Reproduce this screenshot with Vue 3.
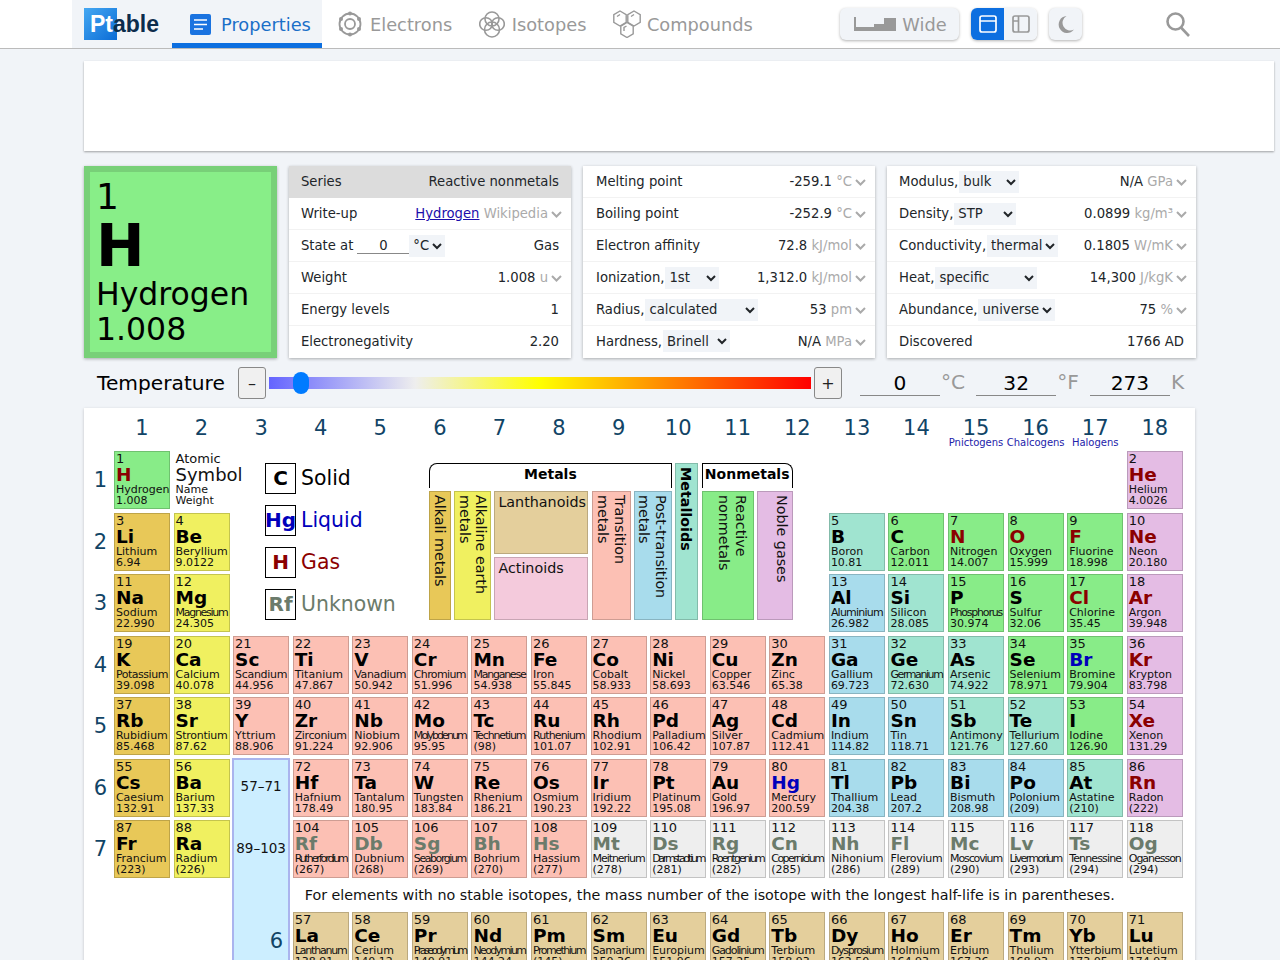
<template>
  <header class="topbar">
    <div class="brand-tabs">
      <a class="logo"><span class="logo-pt">Pt</span>able</a>
      <a class="tab active">
        <svg width="21" height="21" viewBox="0 0 21 21"><rect width="21" height="21" rx="2" fill="#1a73e0" /><path d="M4 6h13M4 10.5h13M4 15h9" stroke="#fff" stroke-width="1.6" /></svg>
        Properties
      </a>
    </div>
    <nav class="tabs">
      <a class="tab">
        <svg width="24" height="26" viewBox="0 0 24 26" fill="none" stroke="#999" stroke-width="1.8">
          <circle cx="12" cy="13" r="10.5" />
          <circle cx="12" cy="13" r="5" />
          <g fill="#999" stroke="none">
            <circle cx="12" cy="2.5" r="2" /><circle cx="12" cy="23.5" r="2" /><circle cx="3" cy="8" r="2" />
            <circle cx="21" cy="8" r="2" /><circle cx="3" cy="18" r="2" /><circle cx="21" cy="18" r="2" />
          </g>
        </svg>
        Electrons
      </a>
      <a class="tab tab-iso">
        <svg width="26" height="27" viewBox="0 0 26 27" fill="none" stroke="#999" stroke-width="1.6">
          <circle cx="13" cy="8" r="7" />
          <circle cx="7" cy="13" r="6.300" />
          <circle cx="19" cy="13" r="6.300" />
          <circle cx="13" cy="18.500" r="7.500" />
        </svg>
        Isotopes
      </a>
      <a class="tab tab-comp">
        <svg width="28" height="28" viewBox="0 0 28 28" fill="none" stroke="#999" stroke-width="1.4">
          <path d="M7 1l6.200 3.700v7.600L7 16 .8 12.300V4.700z" />
          <path d="M21 1l6.200 3.700v7.600L21 16l-6.200-3.700V4.700z" />
          <path d="M14 12.500l6.200 3.700v7.600L14 27.500l-6.200-3.700v-7.600z" />
          <path d="M4 6.500l3-2M18 6.500l3-2M11 21l0-3.500l2.500-1.500" />
        </svg>
        Compounds
      </a>
    </nav>
    <div class="tools">
      <button class="tool wide" type="button">
        <svg width="42" height="14" viewBox="0 0 42 14"><path d="M0 0h2v10h18V7h10V1h12v13H0z" fill="#999" /></svg>
        Wide
      </button>
      <div class="tool-pair">
        <button class="tool on" type="button">
          <svg width="18" height="18" viewBox="0 0 18 18" fill="none" stroke="#fff" stroke-width="1.7"><rect x="1" y="1" width="16" height="16" rx="2" /><path d="M1 6h16" /></svg>
        </button>
        <button class="tool" type="button">
          <svg width="18" height="18" viewBox="0 0 18 18" fill="none" stroke="#999" stroke-width="1.7"><rect x="1" y="1" width="16" height="16" rx="2" /><path d="M6.500 1v16M1 6h5.500" /></svg>
        </button>
      </div>
      <button class="tool" type="button">
        <svg width="16" height="17" viewBox="0 0 16 17"><path d="M8.500 0A8.500 8.500 0 1 0 16 13.500 7.500 7.500 0 0 1 8.500 0z" fill="#999" /></svg>
      </button>
      <svg class="search" width="24" height="25" viewBox="0 0 24 25" fill="none" stroke="#999" stroke-width="2.600"><circle cx="9.500" cy="9.500" r="8" /><path d="M15 15.500l8 8.500" /></svg>
    </div>
  </header>

  <main class="page">
    <div class="ad-slot"></div>

    <section class="overview">
      <div class="big-element">
        <div class="big-num">1</div>
        <div class="big-sym">H</div>
        <div class="big-name">Hydrogen</div>
        <div class="big-weight">1.008</div>
      </div>

      <div class="panel panel-a">
        <div class="row series"><span>Series</span><span>Reactive nonmetals</span></div>
        <div class="row">
          <span>Write-up</span>
          <span class="value"><a class="link" href="#">Hydrogen</a> <span class="unit">Wikipedia</span><svg class="chev" width="11" height="7" viewBox="0 0 11 7"><path d="M1 1l4.500 4.500L10 1" /></svg></span>
        </div>
        <div class="row">
          <span class="label">State at<input class="state-input" value="0" /><select class="pick state-unit"><option>°C</option><option>°F</option><option>K</option></select></span>
          <span>Gas</span>
        </div>
        <div class="row">
          <span>Weight</span>
          <span class="value">1.008 <span class="unit">u</span><svg class="chev" width="11" height="7" viewBox="0 0 11 7"><path d="M1 1l4.500 4.500L10 1" /></svg></span>
        </div>
        <div class="row"><span>Energy levels</span><span>1</span></div>
        <div class="row"><span>Electronegativity</span><span>2.20</span></div>
      </div>

      <div v-for="(panel, i) in panels" :key="i" class="panel" :class="i === 0 ? 'panel-b' : 'panel-c'">
        <div v-for="item in panel" :key="item.label" class="row">
          <span class="label">
            {{ item.label }}
            <select v-if="item.options" class="pick" :style="{ width: item.width + 'px' }">
              <option v-for="o in item.options" :key="o">{{ o }}</option>
            </select>
          </span>
          <span v-if="item.unit" class="value">{{ item.value }} <span class="unit">{{ item.unit }}</span><svg class="chev" width="11" height="7" viewBox="0 0 11 7"><path d="M1 1l4.500 4.500L10 1" /></svg></span>
          <span v-else>{{ item.value }}</span>
        </div>
      </div>
    </section>

    <section class="temperature">
      <span class="temp-title">Temperature</span>
      <button class="step" type="button">–</button>
      <input class="slider" type="range" min="0" max="6000" value="273" />
      <button class="step" type="button">+</button>
      <div class="temp-fields">
        <label v-for="t in temps" :key="t.unit" class="temp-field">
          <input :value="t.value" /><span>{{ t.unit }}</span>
        </label>
      </div>
    </section>

    <section class="table-card">
      <div class="ptable">
        <div v-for="g in 18" :key="g" class="group-head" :style="{ gridColumn: g + 1 }">
          {{ g }}
          <small v-if="groupNames[g]">{{ groupNames[g] }}</small>
        </div>
        <div v-for="p in 7" :key="p" class="period" :style="{ gridRow: p + 1 }">{{ p }}</div>

        <div class="el key">
          <div class="el-num">Atomic</div>
          <div class="el-sym">Symbol</div>
          <div class="el-name">Name</div>
          <div class="el-weight">Weight</div>
        </div>

        <div class="states">
          <div v-for="s in stateKey" :key="s.label" class="state" :class="s.cls">
            <b>{{ s.sym }}</b><span>{{ s.label }}</span>
          </div>
        </div>

        <div class="cats">
          <div class="bracket metals">Metals</div>
          <div class="bar bold metalloid metalloid-bar">Metalloids</div>
          <div class="bracket nonmetals">Nonmetals</div>
          <div class="bar alkali">Alkali metals</div>
          <div class="bar alkaline">Alkaline earth<br />metals</div>
          <div class="flat lanth">Lanthanoids</div>
          <div class="flat actin">Actinoids</div>
          <div class="bar trans">Transition<br />metals</div>
          <div class="bar post">Post-transition<br />metals</div>
          <div class="bar nonmetal">Reactive<br />nonmetals</div>
          <div class="bar noble">Noble gases</div>
        </div>

        <div
          v-for="el in elements"
          :key="el.num"
          class="el"
          :class="[el.cat, el.state]"
          :style="{ gridColumn: el.col + 1, gridRow: el.row + 1 }"
        >
          <div class="el-num">{{ el.num }}</div>
          <div class="el-sym">{{ el.sym }}</div>
          <div class="el-name" :style="{ letterSpacing: el.squeeze }">{{ el.name }}</div>
          <div class="el-weight">{{ el.weight }}</div>
        </div>

        <div class="series-link">
          <div>57–71</div>
          <div>89–103</div>
          <div class="series-period">6</div>
        </div>

        <p class="note">For elements with no stable isotopes, the mass number of the isotope with the longest half-life is in parentheses.</p>
      </div>
    </section>
  </main>
</template>

<script setup>
const panels = [
  [
    { label: 'Melting point', value: '-259.1', unit: '°C' },
    { label: 'Boiling point', value: '-252.9', unit: '°C' },
    { label: 'Electron affinity', value: '72.8', unit: 'kJ/mol' },
    { label: 'Ionization,', options: ['1st', '2nd', '3rd'], width: 54, value: '1,312.0', unit: 'kJ/mol' },
    { label: 'Radius,', options: ['calculated', 'empirical', 'covalent'], width: 113, value: '53', unit: 'pm' },
    { label: 'Hardness,', options: ['Brinell', 'Mohs', 'Vickers'], width: 67, value: 'N/A', unit: 'MPa' },
  ],
  [
    { label: 'Modulus,', options: ['bulk', 'shear', 'young'], width: 60, value: 'N/A', unit: 'GPa' },
    { label: 'Density,', options: ['STP', 'liquid'], width: 62, value: '0.0899', unit: 'kg/m³' },
    { label: 'Conductivity,', options: ['thermal', 'electric'], width: 71, value: '0.1805', unit: 'W/mK' },
    { label: 'Heat,', options: ['specific', 'vaporization', 'fusion'], width: 102, value: '14,300', unit: 'J/kgK' },
    { label: 'Abundance,', options: ['universe', 'solar', 'crust'], width: 77, value: '75', unit: '%' },
    { label: 'Discovered', value: '1766 AD' },
  ],
]

const temps = [
  { value: 0, unit: '°C' },
  { value: 32, unit: '°F' },
  { value: 273, unit: 'K' },
]

const groupNames = { 15: 'Pnictogens', 16: 'Chalcogens', 17: 'Halogens' }

const stateKey = [
  { sym: 'C', label: 'Solid', cls: 'solid' },
  { sym: 'Hg', label: 'Liquid', cls: 'liquid' },
  { sym: 'H', label: 'Gas', cls: 'gas' },
  { sym: 'Rf', label: 'Unknown', cls: 'unknown-state' },
]

// num sym name weight category period group
const raw = `1 H Hydrogen 1.008 nonmetal 1 1
2 He Helium 4.0026 noble 1 18
3 Li Lithium 6.94 alkali 2 1
4 Be Beryllium 9.0122 alkaline 2 2
5 B Boron 10.81 metalloid 2 13
6 C Carbon 12.011 nonmetal 2 14
7 N Nitrogen 14.007 nonmetal 2 15
8 O Oxygen 15.999 nonmetal 2 16
9 F Fluorine 18.998 nonmetal 2 17
10 Ne Neon 20.180 noble 2 18
11 Na Sodium 22.990 alkali 3 1
12 Mg Magnesium 24.305 alkaline 3 2
13 Al Aluminium 26.982 post 3 13
14 Si Silicon 28.085 metalloid 3 14
15 P Phosphorus 30.974 nonmetal 3 15
16 S Sulfur 32.06 nonmetal 3 16
17 Cl Chlorine 35.45 nonmetal 3 17
18 Ar Argon 39.948 noble 3 18
19 K Potassium 39.098 alkali 4 1
20 Ca Calcium 40.078 alkaline 4 2
21 Sc Scandium 44.956 trans 4 3
22 Ti Titanium 47.867 trans 4 4
23 V Vanadium 50.942 trans 4 5
24 Cr Chromium 51.996 trans 4 6
25 Mn Manganese 54.938 trans 4 7
26 Fe Iron 55.845 trans 4 8
27 Co Cobalt 58.933 trans 4 9
28 Ni Nickel 58.693 trans 4 10
29 Cu Copper 63.546 trans 4 11
30 Zn Zinc 65.38 trans 4 12
31 Ga Gallium 69.723 post 4 13
32 Ge Germanium 72.630 metalloid 4 14
33 As Arsenic 74.922 metalloid 4 15
34 Se Selenium 78.971 nonmetal 4 16
35 Br Bromine 79.904 nonmetal 4 17
36 Kr Krypton 83.798 noble 4 18
37 Rb Rubidium 85.468 alkali 5 1
38 Sr Strontium 87.62 alkaline 5 2
39 Y Yttrium 88.906 trans 5 3
40 Zr Zirconium 91.224 trans 5 4
41 Nb Niobium 92.906 trans 5 5
42 Mo Molybdenum 95.95 trans 5 6
43 Tc Technetium (98) trans 5 7
44 Ru Ruthenium 101.07 trans 5 8
45 Rh Rhodium 102.91 trans 5 9
46 Pd Palladium 106.42 trans 5 10
47 Ag Silver 107.87 trans 5 11
48 Cd Cadmium 112.41 trans 5 12
49 In Indium 114.82 post 5 13
50 Sn Tin 118.71 post 5 14
51 Sb Antimony 121.76 metalloid 5 15
52 Te Tellurium 127.60 metalloid 5 16
53 I Iodine 126.90 nonmetal 5 17
54 Xe Xenon 131.29 noble 5 18
55 Cs Caesium 132.91 alkali 6 1
56 Ba Barium 137.33 alkaline 6 2
72 Hf Hafnium 178.49 trans 6 4
73 Ta Tantalum 180.95 trans 6 5
74 W Tungsten 183.84 trans 6 6
75 Re Rhenium 186.21 trans 6 7
76 Os Osmium 190.23 trans 6 8
77 Ir Iridium 192.22 trans 6 9
78 Pt Platinum 195.08 trans 6 10
79 Au Gold 196.97 trans 6 11
80 Hg Mercury 200.59 trans 6 12
81 Tl Thallium 204.38 post 6 13
82 Pb Lead 207.2 post 6 14
83 Bi Bismuth 208.98 post 6 15
84 Po Polonium (209) post 6 16
85 At Astatine (210) metalloid 6 17
86 Rn Radon (222) noble 6 18
87 Fr Francium (223) alkali 7 1
88 Ra Radium (226) alkaline 7 2
104 Rf Rutherfordium (267) trans 7 4
105 Db Dubnium (268) trans 7 5
106 Sg Seaborgium (269) trans 7 6
107 Bh Bohrium (270) trans 7 7
108 Hs Hassium (277) trans 7 8
109 Mt Meitnerium (278) unknown 7 9
110 Ds Darmstadtium (281) unknown 7 10
111 Rg Roentgenium (282) unknown 7 11
112 Cn Copernicium (285) unknown 7 12
113 Nh Nihonium (286) unknown 7 13
114 Fl Flerovium (289) unknown 7 14
115 Mc Moscovium (290) unknown 7 15
116 Lv Livermorium (293) unknown 7 16
117 Ts Tennessine (294) unknown 7 17
118 Og Oganesson (294) unknown 7 18
57 La Lanthanum 138.91 lanth 9 4
58 Ce Cerium 140.12 lanth 9 5
59 Pr Praseodymium 140.91 lanth 9 6
60 Nd Neodymium 144.24 lanth 9 7
61 Pm Promethium (145) lanth 9 8
62 Sm Samarium 150.36 lanth 9 9
63 Eu Europium 151.96 lanth 9 10
64 Gd Gadolinium 157.25 lanth 9 11
65 Tb Terbium 158.93 lanth 9 12
66 Dy Dysprosium 162.50 lanth 9 13
67 Ho Holmium 164.93 lanth 9 14
68 Er Erbium 167.26 lanth 9 15
69 Tm Thulium 168.93 lanth 9 16
70 Yb Ytterbium 173.05 lanth 9 17
71 Lu Lutetium 174.97 lanth 9 18`

const gases = ['H', 'He', 'N', 'O', 'F', 'Ne', 'Cl', 'Ar', 'Kr', 'Xe', 'Rn']
const liquids = ['Br', 'Hg']

const ctx = document.createElement('canvas').getContext('2d')
ctx.font = '11px "DejaVu Sans"'

// long names get squeezed so they stay inside the 56px cell
function squeeze(name) {
  const width = ctx.measureText(name).width
  if (width <= 54) return undefined
  return ((52 - width) / name.length).toFixed(2) + 'px'
}

function stateOf(num, sym) {
  if (num >= 104) return 'unknown-state'
  if (gases.includes(sym)) return 'gas'
  if (liquids.includes(sym)) return 'liquid'
  return 'solid'
}

const elements = raw.split('\n').map((line) => {
  const [num, sym, name, weight, cat, row, col] = line.split(' ')
  return {
    num: Number(num),
    sym,
    name,
    weight,
    cat,
    row: Number(row),
    col: Number(col),
    state: stateOf(Number(num), sym),
    squeeze: squeeze(name),
  }
})
</script>

<style>
html {
  overflow: hidden;
}
body {
  background: #f1f4f8;
}
</style>

<style scoped>
.topbar {
  display: flex;
  align-items: stretch;
  height: 48px;
  padding-left: 72px;
  background: #fff;
  border-bottom: 1px solid #bbb;
  font-family: "DejaVu Sans", sans-serif;
  font-size: 17.800px;
  color: #999;
}
.brand-tabs {
  display: flex;
  width: 250px;
  background: #f1f4f8;
}
.logo {
  width: 70px;
  height: 32px;
  margin: 8px 12px 0 12px;
  padding-left: 6px;
  background: linear-gradient(135deg, #45a8f2, #0b6cd6) no-repeat 0 0 / 33px 32px;
  font: bold 23px/32px "Liberation Sans", sans-serif;
  color: #0c2c4c;
}
.logo-pt {
  color: #fff;
}
.tab {
  display: flex;
  align-items: center;
  gap: 8px;
}
.tab.active {
  width: 150px;
  box-sizing: border-box;
  padding-left: 18px;
  gap: 10px;
  box-shadow: inset 0 -5px 0 #0d6fe0;
  color: #1a6fc8;
}
.tab-iso {
  gap: 7px;
}
.tab-comp {
  gap: 6px;
}
.tabs {
  display: flex;
  gap: 26.500px;
  margin-left: 16px;
}
.tools {
  display: flex;
  align-items: center;
  gap: 12px;
  margin-left: auto;
  padding-right: 90px;
}
.tool {
  display: flex;
  align-items: center;
  justify-content: center;
  width: 33px;
  height: 32px;
  padding: 0;
  border: 0;
  border-radius: 6px;
  background: #f1f4f8;
  box-shadow: 0 1px 3px rgba(0, 0, 0, 0.3);
  font: inherit;
  color: inherit;
}
.wide {
  width: 119px;
  gap: 6px;
  padding-left: 2px;
}
.tool-pair {
  display: flex;
  border-radius: 6px;
  overflow: hidden;
  box-shadow: 0 1px 3px rgba(0, 0, 0, 0.3);
}
.tool-pair .tool {
  border-radius: 0;
  box-shadow: none;
}
.tool.on {
  background: #0d6fe0;
}
.search {
  margin-left: 72px;
}

.page {
  width: 1112px;
  margin-left: 84px;
  padding-top: 12px;
  font-family: "DejaVu Sans", sans-serif;
  color: #212529;
}
.ad-slot {
  width: 1190px;
  height: 90px;
  margin-bottom: 15px;
  background: #fff;
  box-shadow: 0 1px 2px rgba(0, 0, 0, 0.35);
}
.overview {
  display: flex;
  gap: 12px;
  height: 192px;
}
.big-element {
  width: 193px;
  box-sizing: border-box;
  padding: 7px 0 0 6px;
  background: #88ee88;
  border: 6px solid #78d078;
  box-shadow: 0 1px 3px rgba(0, 0, 0, 0.3);
  color: #000;
}
.big-num {
  font-size: 36px;
  line-height: 36px;
}
.big-sym {
  font-size: 58px;
  font-weight: bold;
  line-height: 62px;
}
.big-name {
  font-size: 31.500px;
  line-height: 35px;
}
.big-weight {
  font-size: 31.500px;
  line-height: 34px;
}
.panel {
  background: #fff;
  box-shadow: 0 1px 3px rgba(0, 0, 0, 0.3);
  font-size: 13.200px;
}
.panel-a { width: 282px; }
.panel-b { width: 292px; }
.panel-c { width: 309px; }
.panel-b .row {
  padding-left: 13px;
}
.row {
  display: flex;
  align-items: center;
  justify-content: space-between;
  height: 32px;
  box-sizing: border-box;
  padding: 0 12px;
  border-bottom: 1px solid #f2f2f2;
  white-space: nowrap;
}
.row:last-child,
.series {
  padding-bottom: 2px;
  border-bottom: 0;
}
.series {
  background: #dcdcdc;
}
.label {
  display: flex;
  align-items: center;
  gap: 1px;
}
.value {
  margin-right: -3px;
  white-space: pre;
}
.link {
  color: #1a0dab;
}
.unit {
  color: #aaa;
}
.chev {
  margin-left: 3px;
  fill: none;
  stroke: #aaa;
  stroke-width: 2;
}
.pick {
  height: 22px;
  border: 0;
  background: #f1f4f8;
  font: inherit;
  color: inherit;
}
.state-input {
  width: 52px;
  margin-left: 3px;
  padding: 0;
  border: 0;
  border-bottom: 1px solid #888;
  background: transparent;
  font: inherit;
  color: inherit;
  text-align: center;
}
.state-unit {
  width: 36px;
  margin-left: -1px;
}

.temperature {
  display: flex;
  align-items: center;
  height: 32px;
  margin: 9px 0;
  padding-left: 13px;
  font-size: 20.200px;
  color: #000;
}
.temp-title {
  width: 128px;
  flex: none;
  margin-right: 13px;
  white-space: nowrap;
}
.step {
  width: 28px;
  height: 32px;
  padding: 0;
  border: 1px solid #888;
  border-radius: 3px;
  background: #f0f0f0;
  font: 16px "DejaVu Sans", sans-serif;
  color: #222;
}
.slider {
  appearance: none;
  width: 542px;
  height: 12px;
  margin: 0 3px;
  background: linear-gradient(to right, #6464ff, #eeeeee 27%, #ffff00 50%, #ff0000);
}
.slider::-webkit-slider-thumb {
  appearance: none;
  width: 16px;
  height: 22px;
  border-radius: 8px;
  background: #007bff;
}
.temp-fields {
  display: flex;
  gap: 11px;
  margin-left: 18px;
}
.temp-field {
  display: flex;
  color: #999;
}
.temp-field input {
  width: 80px;
  height: 26px;
  box-sizing: border-box;
  padding: 0;
  margin-right: 1px;
  border: 0;
  border-bottom: 1px solid #888;
  background: transparent;
  font: inherit;
  color: #000;
  text-align: center;
}

.table-card {
  width: 1111px;
  height: 560px;
  box-sizing: border-box;
  padding-left: 6.400px;
  background: #fff;
  box-shadow: 0 1px 3px rgba(0, 0, 0, 0.2);
}
.ptable {
  display: grid;
  grid-template-columns: 20px repeat(18, 56.04px);
  grid-template-rows: 39.500px repeat(7, 58px) 27px 58px;
  column-gap: 3.550px;
  row-gap: 3.500px;
}
.group-head {
  grid-row: 1;
  display: flex;
  flex-direction: column;
  align-items: center;
  padding-top: 7px;
  font-size: 21px;
  line-height: 26px;
  color: #114466;
  white-space: nowrap;
}
.group-head small {
  margin-top: -4px;
  font-size: 10px;
  line-height: 12px;
  color: #2222aa;
}
.period {
  grid-column: 1;
  display: flex;
  align-items: center;
  justify-content: center;
  font-size: 21px;
  color: #114466;
}
.el {
  box-sizing: border-box;
  padding: 0 1px;
  border: 1px solid rgba(0, 0, 0, 0.18);
  white-space: nowrap;
  color: #111;
}
.el-num {
  font-size: 13px;
  line-height: 13px;
}
.el-sym {
  font-size: 18.500px;
  font-weight: bold;
  line-height: 19px;
  color: #000;
}
.el-name {
  font-size: 11px;
  line-height: 11px;
}
.el-weight {
  font-size: 11px;
  line-height: 11px;
}
.gas .el-sym { color: #8b0000; }
.liquid .el-sym { color: #0000bb; }
.unknown-state .el-sym { color: #6b7b6b; }

.key {
  grid-column: 3;
  grid-row: 2;
  border-color: transparent;
}
.key .el-sym {
  font-size: 18px;
  font-weight: normal;
  color: #111;
}
.states {
  grid-column: 4 / span 3;
  grid-row: 2 / span 3;
  display: flex;
  flex-direction: column;
  gap: 11px;
  padding: 11.500px 0 0 32px;
}
.state {
  display: flex;
  align-items: center;
  gap: 5px;
  height: 31px;
  font-size: 20.400px;
  white-space: nowrap;
}
.state b {
  display: flex;
  justify-content: center;
  width: 31px;
  height: 31px;
  box-sizing: border-box;
  border: 1px solid #000;
  font-size: 20px;
  line-height: 29px;
}
.state.solid { color: #000; }
.state.liquid { color: #0000bb; }
.state.gas { color: #8b0000; }
.state.unknown-state { color: #6b7b6b; }
.cats {
  grid-column: 7 / span 8;
  grid-row: 2 / span 3;
  display: grid;
  grid-template-columns: 22px 37px 94px 39px 38px 23px 52px 36px;
  grid-template-rows: 25px 63px 63px;
  gap: 3px 3.290px;
  margin: 12px 0 0 17px;
  font-size: 14.300px;
  color: #111;
}
.bracket {
  display: flex;
  justify-content: center;
  padding-top: 2px;
  border: 1px solid #000;
  border-bottom: 0;
  font-size: 14px;
  font-weight: bold;
  color: #000;
}
.metals {
  grid-column: 1 / span 5;
  border-top-left-radius: 8px;
}
.nonmetals {
  grid-column: 7 / span 2;
  border-top-right-radius: 8px;
}
.metalloid-bar {
  grid-column: 6;
  grid-row: 1 / span 3;
}
.bar,
.flat {
  box-sizing: border-box;
  border: 1px solid rgba(0, 0, 0, 0.18);
}
.bar {
  grid-row: 2 / span 2;
  display: block;
  padding: 3px 0;
  writing-mode: vertical-rl;
  line-height: 16.500px;
  white-space: nowrap;
  text-align: left;
}
.bar.bold {
  grid-row: 1 / span 3;
  font-weight: bold;
  color: #000;
}
.flat {
  padding: 2px 0 0 3px;
}
.lanth { background: #e4cf9c; }
.actin {
  background: #f4cadc;
}
.flat.lanth { grid-column: 3; grid-row: 2; }
.flat.actin { grid-column: 3; grid-row: 3; }
.bar.alkali { grid-column: 1; padding-right: 1.500px; }
.bar.alkaline { grid-column: 2; padding-right: 1px; }
.bar.trans { grid-column: 4; padding-right: 2px; }
.bar.post { grid-column: 5; padding-right: 2px; }
.bar.metalloid-bar { padding-right: 3px; }
.bar.nonmetal { grid-column: 7; padding-right: 4px; }
.bar.noble { grid-column: 8; padding-right: 2px; }
.alkali { background: #e8c858; }
.alkaline { background: #f0f060; }
.trans { background: #fcc0b4; }
.post { background: #a8dcec; }
.metalloid { background: #a0e4d0; }
.nonmetal { background: #88ec88; }
.noble { background: #e4bce4; }
.unknown { background: #eeeeee; }

.series-link {
  grid-column: 4;
  grid-row: 7 / span 4;
  display: flex;
  flex-direction: column;
  align-items: center;
  box-sizing: border-box;
  margin: -1px -1px 0 -1px;
  padding-top: 18px;
  border: 2px solid #aab4ee;
  border-bottom: 0;
  background: #cceeff;
  font-size: 13.500px;
  color: #111;
}
.series-link div:nth-child(2) {
  margin-top: 46px;
}
.series-period {
  align-self: flex-end;
  margin: 73px 5px 0 0;
  font-size: 21px;
  color: #114466;
}
.note {
  grid-column: 5 / span 15;
  grid-row: 9;
  display: flex;
  align-items: center;
  margin: 0;
  padding-left: 12px;
  font-size: 14.300px;
  color: #111;
  white-space: nowrap;
}
</style>
